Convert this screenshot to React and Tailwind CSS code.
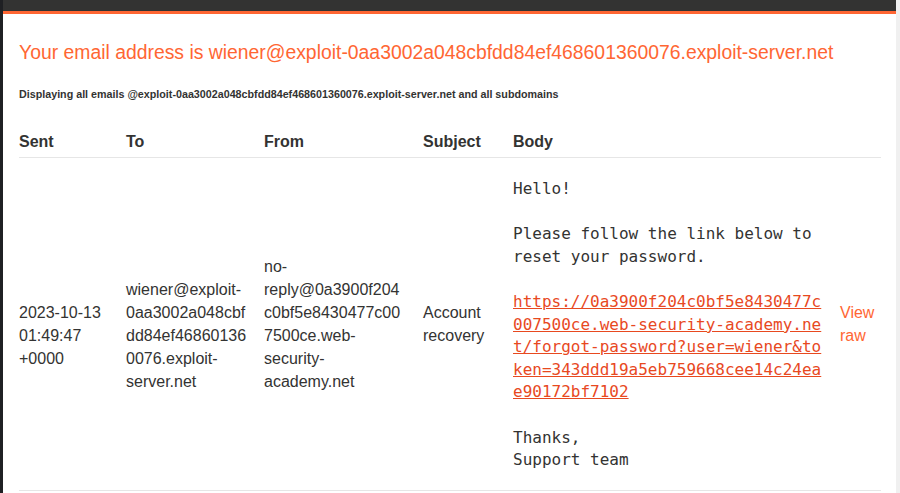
const sans = "font-['Liberation_Sans',Arial,sans-serif]";
const mono = "font-['DejaVu_Sans_Mono','Liberation_Mono',monospace]";

const resetLink =
  "https://0a3900f204c0bf5e8430477c007500ce.web-security-academy.net/forgot-password?user=wiener&token=343ddd19a5eb759668cee14c24eae90172bf7102";

export default function App() {
  return (
    <div className={`flex h-[493px] w-full overflow-hidden bg-white text-[#333332] ${sans}`}>
      {/* left window edge */}
      <div className="w-[3px] shrink-0 bg-[#1f2023]" />

      <div className="flex min-w-0 flex-1 flex-col">
        <div className="h-[14px] shrink-0 border-b-[3px] border-[#ff6633] bg-[#333332]" />

        <div className="pl-4 pr-[15px]">
          <h1 className="mt-[27px] text-[19.38px] leading-[23px] font-normal text-[#ff6633]">
            Your email address is wiener@exploit-0aa3002a048cbfdd84ef468601360076.exploit-server.net
          </h1>
          <h4 className="mt-[23px] text-[10.72px] leading-[14px] font-bold">
            Displaying all emails @exploit-0aa3002a048cbfdd84ef468601360076.exploit-server.net and all subdomains
          </h4>

          {/* emails table */}
          <div className="grid grid-cols-[107px_138px_159px_90px_327px_41px]">
            {["Sent", "To", "From", "Subject", "Body", ""].map((h, i) => (
              <div
                key={i}
                className="border-b border-[#e6e6e6] pt-[29px] pb-[4px] text-base leading-[23px] font-bold"
              >
                {h}
              </div>
            ))}

            <div className="self-center pt-[23px] pr-4 text-base leading-[23px]">
              2023-10-13 01:49:47 +0000
            </div>
            <div className="self-center pt-[23px] pr-4 text-base leading-[23px] [overflow-wrap:anywhere]">
              wiener@exploit-0aa3002a048cbfdd84ef468601360076.exploit-server.net
            </div>
            <div className="self-center pr-[18px] text-base leading-[23px] [overflow-wrap:anywhere]">
              no-reply@0a3900f204c0bf5e8430477c007500ce.web-security-academy.net
            </div>
            <div className="self-center pr-2 text-base leading-[23px]">Account recovery</div>
            <div className="pt-[20px] pr-4 pb-[18px]">
              <pre className={`${mono} text-base leading-[22.6px] whitespace-pre-wrap break-all`}>
                {"Hello!\n\nPlease follow the link below to reset your password.\n\n"}
                <a href="#" className="text-[#e8491f] underline">
                  {resetLink}
                </a>
                {"\n\nThanks,\nSupport team"}
              </pre>
            </div>
            <div className="self-center text-base leading-[23px] text-[#ff6633]">View raw</div>

            <div className="col-span-6 border-b border-[#e6e6e6]" />
          </div>
        </div>
      </div>

      {/* scrollbar edge */}
      <div className="w-[4px] shrink-0 bg-[#f0f0f0]" />
    </div>
  );
}
